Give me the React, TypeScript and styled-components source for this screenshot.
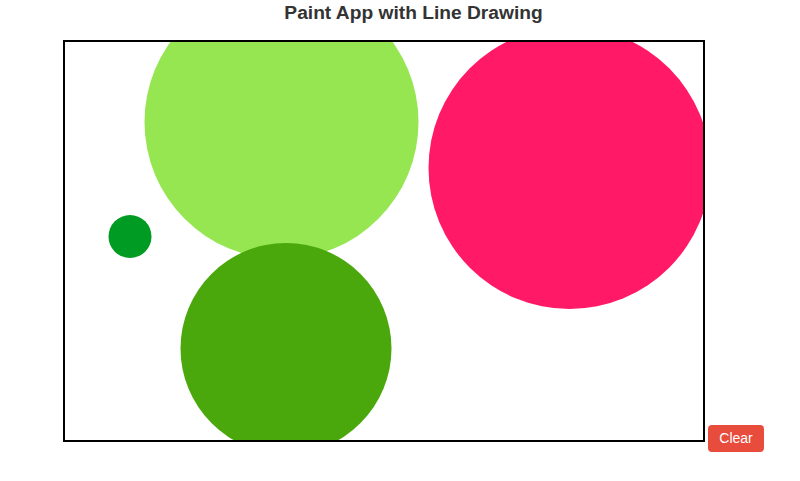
import React from 'react';
import styled, { createGlobalStyle } from 'styled-components';

const GlobalStyle = createGlobalStyle`
	html, body {
		margin: 0;
		padding: 0;
		background: #ffffff;
		font-family: 'Liberation Sans', Arial, sans-serif;
	}
`;

export default function App() {
	return (
		<>
			<GlobalStyle />
			<Page>
				<Title>Paint App with Line Drawing</Title>
				<Board>
					<Canvas width={638} height={398} viewBox="0 0 638 398">
						{circles.map((c, i) => (
							<circle key={i} cx={c.x} cy={c.y} r={c.r} fill={c.color} />
						))}
					</Canvas>
					<ClearButton>Clear</ClearButton>
				</Board>
			</Page>
		</>
	);
}

// positions are relative to the canvas content box (origin at 65, 42)
const circles = [
	{ x: 216.5, y: 80, r: 137, color: '#95e650' },
	{ x: 504.5, y: 126, r: 141, color: '#ff1966' },
	{ x: 65, y: 194.5, r: 21.5, color: '#009b22' },
	{ x: 221, y: 306.5, r: 105.5, color: '#4aa80c' },
];

const Page = styled.div`
	width: 800px;
	box-sizing: border-box;
	padding-left: 27px;
	text-align: center;
`;
const Title = styled.h1`
	margin: 0 0 16px 0;
	padding-top: 1px;
	font-size: 19.2px;
	line-height: 23px;
	font-weight: 700;
	color: #333333;
`;
const Board = styled.div`
	display: flex;
	justify-content: center;
	align-items: flex-end;
	gap: 3px;
`;
const Canvas = styled.svg`
	display: block;
	flex: none;
	margin-bottom: 10px;
	border: 2px solid #000000;
	background: #ffffff;
`;
const ClearButton = styled.button`
	flex: none;
	padding: 5px 11px;
	border: none;
	border-radius: 4px;
	background-color: #e74c3c;
	color: #ffffff;
	font-family: 'Liberation Sans', Arial, sans-serif;
	font-size: 14px;
	line-height: 17px;
	cursor: pointer;
`;
